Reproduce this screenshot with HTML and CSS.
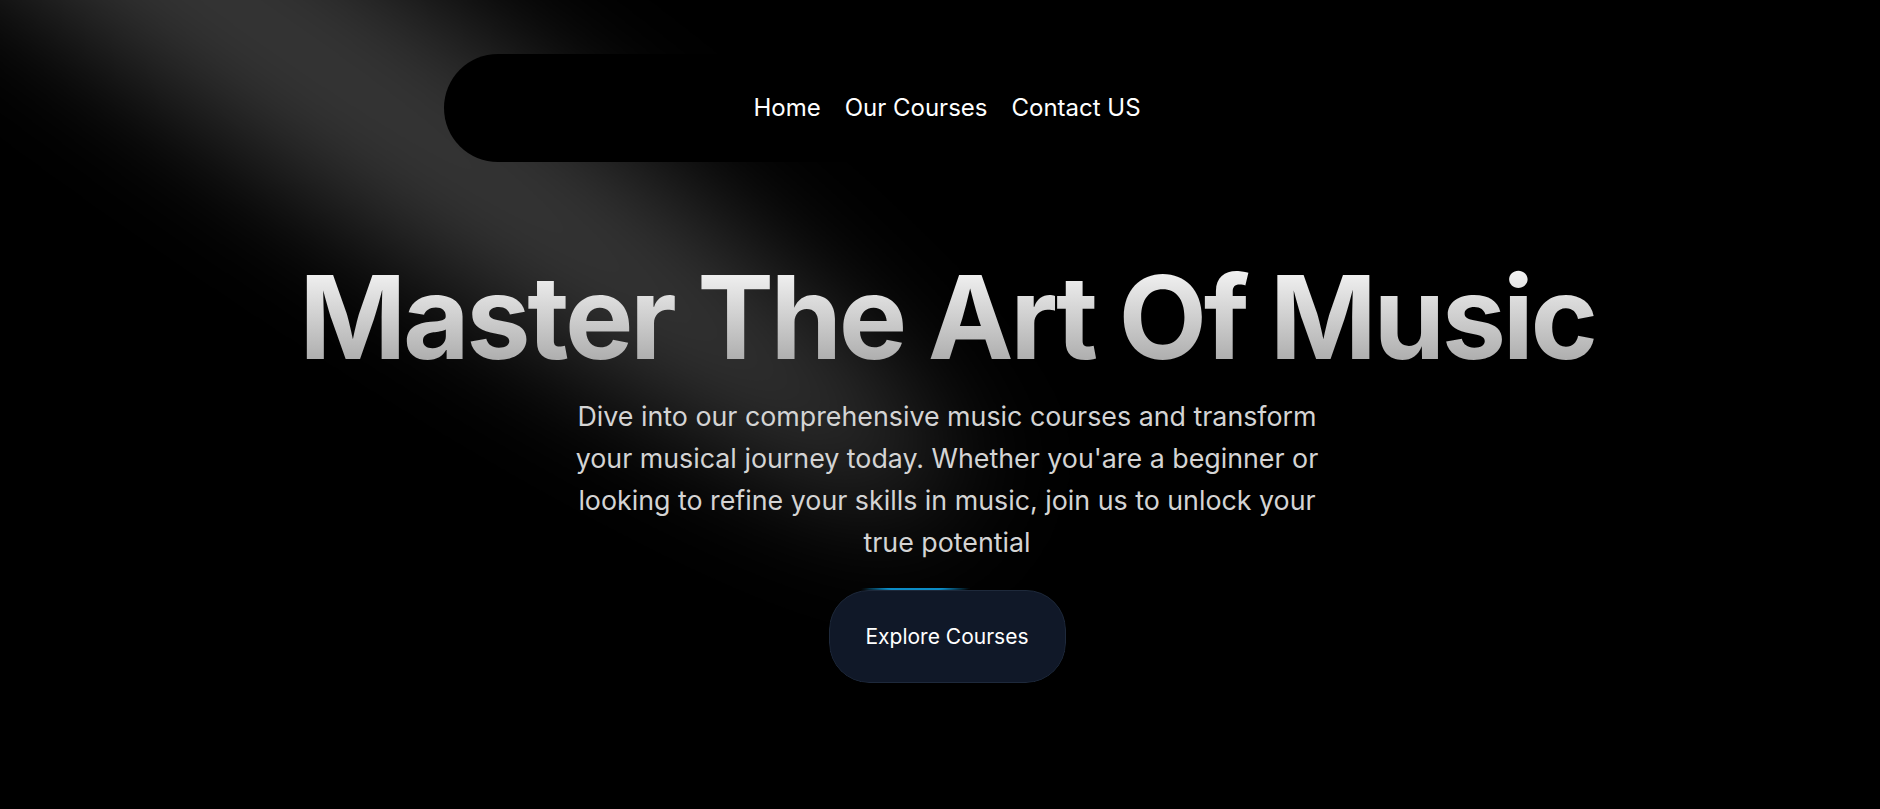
FILE: index.html
```html
<!DOCTYPE html>
<html lang="en">
<head>
<meta charset="utf-8">
<title>Music School</title>
<link rel="stylesheet" href="styles.css">
</head>
<body>
<div class="page">
  <svg class="spotlight" viewBox="0 0 1880 809" preserveAspectRatio="none" aria-hidden="true">
    <defs>
      <filter id="blur" filterUnits="userSpaceOnUse" x="-1200" y="-1200" width="4400" height="3400">
        <feGaussianBlur stdDeviation="63"/>
      </filter>
    </defs>
    <ellipse cx="288" cy="41" rx="803" ry="114" transform="rotate(34.7 288 41)" fill="#ffffff" fill-opacity="0.21" filter="url(#blur)"/>
  </svg>
  <nav class="nav">
    <a class="nav-item" href="#">Home</a>
    <a class="nav-item" href="#">Our Courses</a>
    <a class="nav-item" href="#">Contact US</a>
  </nav>
  <main class="hero">
    <h1 class="title">Master The Art Of Music</h1>
    <p class="lead">Dive into our comprehensive music courses and transform your musical journey today. Whether you'are a beginner or looking to refine your skills in music, join us to unlock your true potential</p>
    <div class="btn-wrap">
      <span class="btn-glow"></span>
      <a class="btn" href="#">Explore Courses</a>
    </div>
  </main>
</div>
</body>
</html>
```
FILE: styles.css
```css
html, body {
  margin: 0;
  padding: 0;
  background: #000;
  height: 100%;
}
body {
  font-family: Inter, "Noto Sans", sans-serif;
  color: #fff;
  overflow: hidden;
}
.page {
  position: relative;
  width: 100%;
  height: 809px;
  display: flex;
  flex-direction: column;
  align-items: center;
  overflow: hidden;
}
.spotlight {
  position: absolute;
  left: 0;
  top: 0;
  width: 1880px;
  height: 809px;
  pointer-events: none;
  z-index: 0;
}
.nav {
  position: relative;
  z-index: 2;
  margin-top: 54px;
  width: 992px;
  height: 108px;
  box-sizing: border-box;
  border-radius: 54px;
  background: #000;
  display: flex;
  justify-content: center;
  align-items: center;
  gap: 24px;
  padding-left: 14px;
}
.nav-item {
  color: #fff;
  text-decoration: none;
  font-size: 24px;
  line-height: 30px;
}
.hero {
  position: relative;
  z-index: 1;
  display: flex;
  flex-direction: column;
  align-items: center;
  margin-top: 98px;
  padding-left: 14px;
}
.title {
  margin: 0;
  font-size: 115px;
  line-height: 1;
  font-weight: 700;
  letter-spacing: -3.4px;
  text-align: center;
  background: linear-gradient(to bottom, #fafafa, #a3a3a3);
  -webkit-background-clip: text;
  background-clip: text;
  color: transparent;
}
.lead {
  margin: 20px 0 0;
  max-width: 760px;
  font-size: 26.8px;
  line-height: 42px;
  color: #d4d4d4;
  text-align: center;
}
.btn-wrap {
  position: relative;
  margin-top: 25px;
  width: 237px;
  height: 95px;
  padding: 2px 0 0;
  box-sizing: border-box;
  border-radius: 40px;
  overflow: hidden;
}
.btn-glow {
  position: absolute;
  left: 30px;
  top: -6px;
  width: 112px;
  height: 12px;
  background: radial-gradient(ellipse at center, rgba(14,165,233,0.85) 35%, transparent 70%);
}
.btn {
  position: relative;
  display: flex;
  align-items: center;
  justify-content: center;
  height: 93px;
  box-sizing: border-box;
  border: 1px solid #1e293b;
  border-radius: 40px;
  background: #101828;
  color: #fff;
  text-decoration: none;
  font-size: 21px;
}
```
